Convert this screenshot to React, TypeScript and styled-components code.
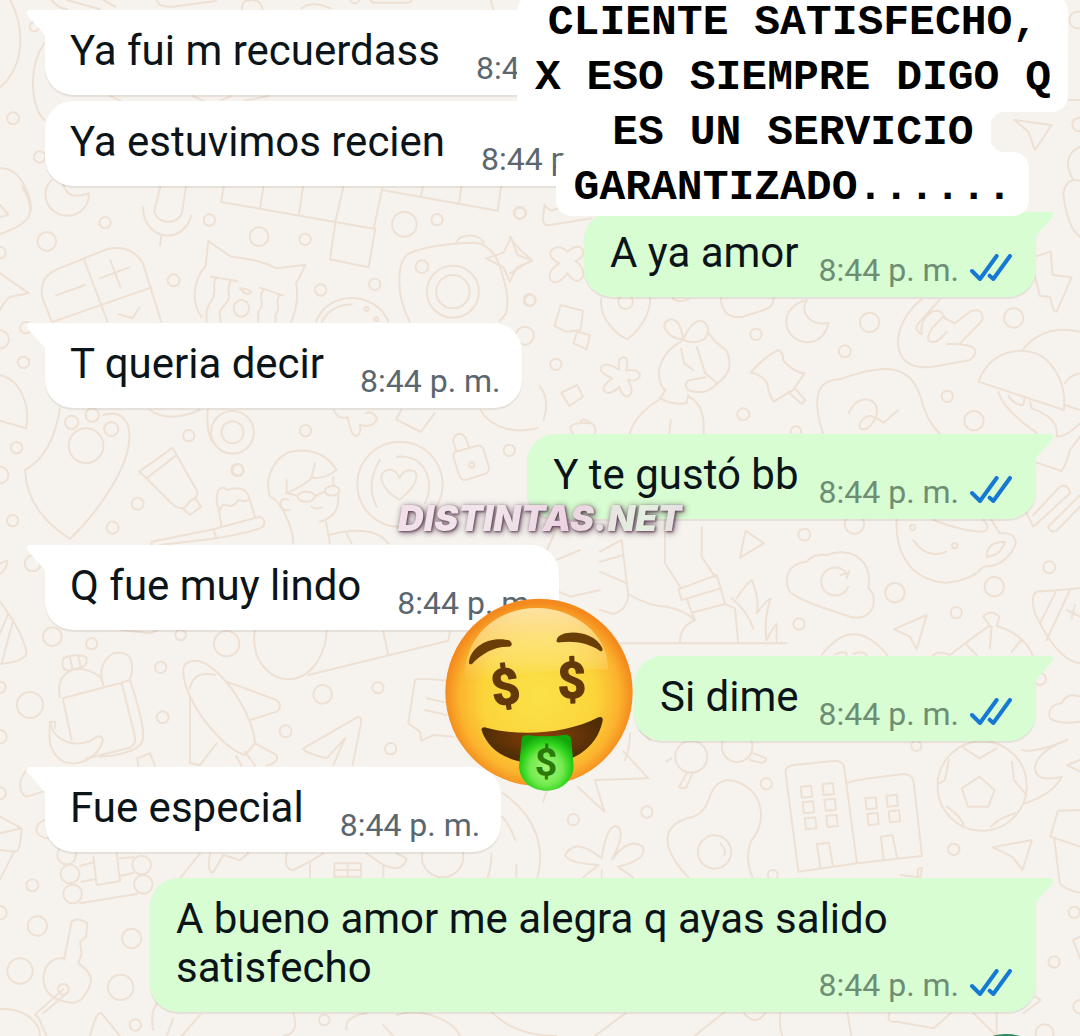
import styled, { createGlobalStyle } from 'styled-components';

export default function App() {
  return (
    <ChatWrapper>
      <GlobalStyle />
      <Wallpaper />
      <MessageList>
        {messages.map((message, index) => (
          <Message key={index} {...message} />
        ))}
      </MessageList>
      <Caption>
        <CaptionBlock>
          CLIENTE SATISFECHO,
          <br />X ESO SIEMPRE DIGO Q
        </CaptionBlock>
        <CaptionJoint>ES UN SERVICIO</CaptionJoint>
        <CaptionFooter>GARANTIZADO......</CaptionFooter>
      </Caption>
      <MoneyFace />
      <Watermark>DISTINTAS.NET</Watermark>
      <RecordButton type="button" aria-label="Mensaje de voz" />
    </ChatWrapper>
  );
}

type MessageProps = {
  text: string;
  time: string;
  mine?: boolean;
  tail?: boolean;
  long?: boolean;
};

function Message({ text, time, mine = false, tail = true, long = false }: MessageProps) {
  return (
    <MessageRow $mine={mine} $tail={tail}>
      <Bubble $mine={mine} $long={long}>
        {tail && (
          <Tail $mine={mine} viewBox="0 0 44 28">
            <path d="M44 0H3Q-1 1 2 6L19 25V28H44Z" />
          </Tail>
        )}
        <BubbleText>{text}</BubbleText>
        <Meta $mine={mine} $long={long}>
          <time>{time}</time>
          {mine && (
            <Ticks viewBox="0 0 126 81">
              <path d="M6 51L30 75L80 6M59 65L70 75L120 6" />
            </Ticks>
          )}
        </Meta>
      </Bubble>
    </MessageRow>
  );
}

function MoneyFace() {
  return (
    <Emoji viewBox="72 54 570 582" role="img" aria-label="money-mouth face">
      <defs>
        <radialGradient id="face" cx="0.5" cy="0.52" r="0.5">
          <stop offset="0" stopColor="#fbe14a" />
          <stop offset="0.6" stopColor="#fbd53a" />
          <stop offset="0.85" stopColor="#fbb42e" />
          <stop offset="1" stopColor="#f48a1d" />
        </radialGradient>
        <linearGradient id="shine" x1="0" y1="0" x2="0" y2="1">
          <stop offset="0" stopColor="#fff3c0" stopOpacity="0.8" />
          <stop offset="0.7" stopColor="#fdeb9a" stopOpacity="0.4" />
          <stop offset="1" stopColor="#fbe27a" stopOpacity="0.05" />
        </linearGradient>
        <radialGradient id="mouth" cx="0.5" cy="0.4" r="0.5">
          <stop offset="0" stopColor="#8a3f0a" />
          <stop offset="1" stopColor="#4f2d05" />
        </radialGradient>
        <radialGradient id="tongue" cx="0.5" cy="0.6" r="0.6">
          <stop offset="0" stopColor="#a6f77c" />
          <stop offset="0.5" stopColor="#72ea4e" />
          <stop offset="0.75" stopColor="#2fd21c" />
          <stop offset="1" stopColor="#12a80c" />
        </radialGradient>
      </defs>
      <circle cx="357" cy="337" r="281" fill="url(#face)" />
      <path
        d="M134 300C130 170 230 84 350 84S568 170 564 270C480 262 430 270 360 276S190 300 134 300Z"
        fill="url(#shine)"
      />
      <path
        d="M147 244C158 186 228 168 270 182Q282 196 268 200C222 198 184 222 156 252Q145 256 147 244Z"
        fill="#6b3e06"
      />
      <path
        d="M410 180C416 148 520 146 547 204Q550 217 540 213C510 190 460 181 422 187Q407 189 410 180Z"
        fill="#6b3e06"
      />
      <FaceDollar x="255" y="373" transform="rotate(-9 255 318)">
        $
      </FaceDollar>
      <FaceDollar x="455" y="353" transform="rotate(-2 455 298)">
        $
      </FaceDollar>
      <path
        d="M184 448Q188 438 202 444C300 470 440 462 535 412Q550 408 548 422C530 510 450 552 366 552C280 552 205 520 184 448Z"
        fill="url(#mouth)"
      />
      <path
        d="M305 478Q306 464 325 466Q380 472 436 464Q452 464 454 480L461 560C458 606 420 632 379 632S300 606 297 560Z"
        fill="url(#tongue)"
      />
      <TongueDollar x="378" y="588">
        $
      </TongueDollar>
    </Emoji>
  );
}

function Wallpaper() {
  return (
    <WallpaperSvg aria-hidden="true">
      {doodles.map(({ x, y, scale, circles, paths }, index) => (
        <g key={index}>
          {circles.map(([cx, cy, r], i) => (
            <circle key={i} cx={x + cx * scale} cy={y + cy / 3} r={r / 3} />
          ))}
          <g transform={`translate(${x} ${y}) scale(${scale} ${1 / 3})`}>
            {paths.map((d, i) => (
              <path key={i} d={d} vectorEffect="non-scaling-stroke" />
            ))}
          </g>
        </g>
      ))}
    </WallpaperSvg>
  );
}

const GlobalStyle = createGlobalStyle`
  * {
    box-sizing: border-box;
  }

  body {
    margin: 0;
    background: #f6f3ee;
    font-family: Roboto, 'Liberation Sans', sans-serif;
  }
`;

const ChatWrapper = styled.main`
  position: relative;
  min-height: 100vh;
  overflow: hidden;
`;

const WallpaperSvg = styled.svg`
  position: absolute;
  inset: 0;
  width: 100%;
  height: 100%;
  fill: none;
  stroke: #eee0d3;
  stroke-width: 2;
  stroke-linecap: round;
  stroke-linejoin: round;
`;

const MessageList = styled.ul`
  position: relative;
  display: flex;
  flex-direction: column;
  margin: 0;
  padding: 10px 44px 24px 45px;
  list-style: none;
`;

const MessageRow = styled.li<{ $mine: boolean; $tail: boolean }>`
  display: flex;
  justify-content: ${({ $mine }) => ($mine ? 'flex-end' : 'flex-start')};
  margin-top: ${({ $tail }) => ($tail ? '26px' : '6px')};

  &:first-child {
    margin-top: 0;
  }
`;

const Bubble = styled.div<{ $mine: boolean; $long: boolean }>`
  position: relative;
  display: flex;
  flex-direction: ${({ $long }) => ($long ? 'column' : 'row')};
  align-items: flex-end;
  gap: ${({ $mine, $long }) => ($long ? '0' : $mine ? '20px' : '36px')};
  max-width: calc(100% - 105px);
  padding: ${({ $mine }) => ($mine ? '16px 24px 9px 26px' : '16px 21px 9px 25px')};
  border-radius: 28px;
  color: #0b1418;
  background: ${({ $mine }) => ($mine ? '#d8fdd2' : '#fff')};
  box-shadow: 0 2px 1px rgba(80, 60, 40, 0.1);
`;

const Tail = styled.svg<{ $mine: boolean }>`
  position: absolute;
  top: 0;
  ${({ $mine }) => ($mine ? 'right: -18px' : 'left: -19px')};
  width: 44px;
  height: 28px;
  transform: ${({ $mine }) => ($mine ? 'scaleX(-1)' : 'none')};
  fill: ${({ $mine }) => ($mine ? '#d8fdd2' : '#fff')};
`;

const BubbleText = styled.p`
  align-self: flex-start;
  margin: 0 0 11px;
  font-size: 42px;
  line-height: 49px;
`;

const Meta = styled.div<{ $mine: boolean; $long: boolean }>`
  display: flex;
  align-items: center;
  gap: 11px;
  margin-top: ${({ $long }) => ($long ? '-36px' : '0')};
  font-size: 32px;
  line-height: 36px;
  white-space: nowrap;
  color: ${({ $mine }) => ($mine ? '#6d8e74' : '#5b676e')};
`;

const Ticks = styled.svg`
  width: 42px;
  height: 27px;
  margin-bottom: 6px;
  fill: none;
  stroke: #1579d3;
  stroke-width: 12;
  stroke-linecap: round;
  stroke-linejoin: round;
`;

const Caption = styled.div`
  position: absolute;
  top: -5px;
  right: 12px;
  display: flex;
  flex-direction: column;
  align-items: center;
  font-family: 'Liberation Mono', monospace;
  font-size: 43px;
  font-weight: 700;
  line-height: 55px;
  text-align: center;
  white-space: nowrap;
  color: #000;
`;

const CaptionBlock = styled.div`
  padding: 0 17px 7px 18px;
  border-radius: 16px;
  background: #fff;
`;

const CaptionJoint = styled.div`
  position: relative;
  margin-top: -7px;
  padding: 0 17px 0 18px;
  background: #fff;

  &::before,
  &::after {
    content: '';
    position: absolute;
    top: 7px;
    bottom: 8px;
    width: 14px;
  }

  &::before {
    right: 100%;
    background:
      radial-gradient(circle at 0 100%, transparent 14px, #fff 15px) top / 14px 14px no-repeat,
      radial-gradient(circle at 0 0, transparent 14px, #fff 15px) bottom / 14px 14px no-repeat;
  }

  &::after {
    left: 100%;
    background:
      radial-gradient(circle at 100% 100%, transparent 14px, #fff 15px) top / 14px 14px no-repeat,
      radial-gradient(circle at 100% 0, transparent 14px, #fff 15px) bottom / 14px 14px no-repeat;
  }
`;

const CaptionFooter = styled.div`
  margin-top: -8px;
  padding: 8px 17px 1px 18px;
  border-radius: 16px;
  background: #fff;
`;

const Emoji = styled.svg`
  position: absolute;
  top: 598px;
  left: calc(50% - 96px);
  width: 190px;
  height: 194px;
`;

const FaceDollar = styled.text`
  font-family: Roboto, sans-serif;
  font-size: 150px;
  font-weight: 700;
  text-anchor: middle;
  fill: #64390a;
  stroke: #64390a;
  stroke-width: 4;
  stroke-linejoin: round;
`;

const TongueDollar = styled(FaceDollar)`
  font-size: 118px;
  fill: #2a7a08;
  stroke: none;
`;

const Watermark = styled.div`
  position: absolute;
  top: 50%;
  left: 50%;
  transform: translate(-50%, -50%);
  font-family: Inter, sans-serif;
  font-size: 36px;
  font-style: italic;
  font-weight: 900;
  line-height: 40px;
  color: transparent;
  background: linear-gradient(100deg, #f3dfea, #f0e6ea 30%, #ecd3e2 60%, #e3f0df 85%, #eadbe4);
  background-clip: text;
  filter: drop-shadow(1px 1px 1px rgba(70, 30, 60, 0.7)) drop-shadow(1px 1px 3px rgba(50, 20, 45, 0.6));
`;

const RecordButton = styled.button`
  position: absolute;
  right: 24px;
  bottom: -98px;
  width: 100px;
  height: 100px;
  border: 0;
  border-radius: 50%;
  background: #2b8a5c;
`;

const messages: MessageProps[] = [
  { text: 'Ya fui m recuerdass', time: '8:44 p. m.' },
  { text: 'Ya estuvimos recien', time: '8:44 p. m.', tail: false },
  { text: 'A ya amor', time: '8:44 p. m.', mine: true },
  { text: 'T queria decir', time: '8:44 p. m.' },
  { text: 'Y te gustó bb', time: '8:44 p. m.', mine: true },
  { text: 'Q fue muy lindo', time: '8:44 p. m.' },
  { text: 'Si dime', time: '8:44 p. m.', mine: true },
  { text: 'Fue especial', time: '8:44 p. m.' },
  {
    text: 'A bueno amor me alegra q ayas salido satisfecho',
    time: '8:44 p. m.',
    mine: true,
    long: true,
  },
];

type Doodle = {
  x: number;
  y: number;
  scale: number;
  circles: number[][];
  paths: string[];
};

const doodles: Doodle[] = [
  // top left corner
  {
    x: 0,
    y: 0,
    scale: 0.3444,
    circles: [[38, 355, 18], [115, 471, 17], [100, 80, 14], [1030, -5, 15]],
    paths: [
      'M30 0C75 90 70 200 0 262M128 130C80 200 90 330 130 360',
      'M150 0Q170 25 195 28M195 0L290 28M300 0L335 20',
      'M455 0Q460 22 500 20L610 5Q625 5 628 0M702 28Q700 0 730 0T762 28',
      'M875 25Q905 0 960 25M1075 0Q1080 10 1095 8L1185 8Q1195 5 1196 0M1425 0L1432 28',
      'M0 505C60 500 90 590 90 630M320 288L350 302M560 288L590 302M640 302L670 288M710 302L780 288',
    ],
  },
  // left: moon, microphone, crossword, calculator, cat, camera
  {
    x: 0,
    y: 180,
    scale: 0.3444,
    circles: [
      [305, 128, 17], [608, 120, 17], [136, 184, 28], [752, 170, 28], [886, 178, 17],
      [504, 301, 18], [1174, 133, 37], [1269, 119, 17], [1510, 100, 17], [931, 330, 17],
      [1088, 313, 17], [1225, 260, 19], [1315, 335, 78], [1315, 335, 50], [1524, 467, 27],
      [1539, 361, 16], [68, 547, 17], [75, 443, 17], [0, 478, 27], [0, 218, 17],
      [208, 727, 20], [268, 705, 20], [323, 747, 21], [250, 797, 52], [548, 767, 17],
      [48, 803, 17], [675, 757, 64], [675, 757, 33], [887, 752, 17], [691, 870, 17],
      [0, 885, 25], [1479, 811, 17], [1370, 855, 8], [1064, 387, 6], [1093, 418, 6],
    ],
    paths: [
      'M180 0C190 60 230 50 258 40A63 63 0 1 1 150 0',
      'M465 20L448 95A42 40 0 0 0 528 100L540 20M415 80C415 180 530 200 556 106M468 170L465 195',
      'M650 20L642 66L1085 146L1110 25M765 20L755 85M880 20L868 103M997 20L975 120L958 238L1070 262L1090 146M1110 30L1445 92L1455 20M1228 20L1222 48M1340 20L1333 70',
      'M65 20C110 100 90 130 0 162M0 75L24 104L0 112',
      'M150 425L122 350Q115 290 165 268L310 208Q380 190 415 250L468 425M243 236L312 425M155 425L440 322M163 346L247 315M290 295L375 262M320 240L350 322M345 403L385 415L405 382',
      'M0 280L84 340L30 350Q15 360 0 390',
      'M585 410C555 370 560 300 597 258L605 183L670 230Q745 235 803 265L887 255L860 310Q870 370 845 425M612 290L688 303M755 323L822 347M697 325Q735 330 728 338Q715 350 697 325M700 360a22 25 0 1 0 2 0',
      'M628 295C610 320 635 330 615 360S600 400 600 425M672 300C650 330 680 345 652 375S645 405 640 425M765 330C745 350 775 365 750 395V425M812 345C795 370 820 380 800 405V425',
      'M918 425C950 330 1090 330 1128 425M935 425Q960 375 1022 373',
      'M1190 425C1150 350 1150 250 1185 222Q1250 190 1380 188Q1440 195 1460 290Q1480 350 1470 400L1450 425M1325 185C1340 160 1390 160 1405 188',
      'M1483 172L1503 225L1547 242L1500 262L1480 305L1462 262L1412 235L1462 218Z',
      'M0 585C60 600 90 680 75 745L0 722',
      'M435 690Q490 730 580 690M603 690Q598 760 620 790',
      'M970 690Q980 720 1010 712Q1020 770 1035 768Q1050 760 1045 735Q1085 745 1095 715Q1080 690 1062 700M1165 690L1150 718L1222 756L1262 700M1395 690C1430 750 1500 760 1560 745',
      'M1322 815L1385 797Q1398 795 1404 808L1420 862Q1420 878 1408 882L1352 900Q1338 900 1334 888L1318 835Q1315 820 1322 815ZM1325 812L1316 785Q1315 763 1335 761Q1350 763 1354 780L1362 802',
    ],
  },
  // left: shield, tube, cake, girl with glasses, heart
  {
    x: 0,
    y: 400,
    scale: 0.3333,
    circles: [
      [413, 311, 18], [338, 383, 18], [712, 210, 18], [38, 362, 17], [157, 710, 28],
      [275, 731, 17], [482, 802, 17], [680, 731, 38], [968, 883, 28], [1134, 863, 17],
      [542, 705, 16], [98, 490, 24], [0, 862, 17], [1200, 253, 128],
    ],
    paths: [
      'M180 25C165 120 130 180 75 210C80 330 170 390 210 417C290 340 410 180 385 80Q370 30 310 45',
      'M418 215L518 143L530 165L440 235ZM530 165L592 275Q595 295 570 302Q560 320 548 325Q535 325 520 315L440 235M548 325L570 345L603 320L588 298',
      'M455 435L455 425L640 388L780 350Q800 360 790 378Q785 390 650 415L480 435M640 388L650 415M665 380L655 325Q645 300 655 270Q670 255 680 270Q730 255 745 285Q755 310 715 300Q700 325 680 315Q665 310 660 330M750 300L765 352',
      'M880 430C880 380 840 300 810 290C790 230 830 155 890 152Q970 145 1010 210Q970 240 935 232Q925 250 860 280V240M935 232L945 190M865 300Q840 290 842 315Q850 335 870 330M1000 230V258M1015 285Q1020 350 960 365M935 320Q945 330 965 322M978 365L990 430M985 405Q1120 370 1165 430M1040 400L1055 430',
      'M893 290Q895 275 920 275Q945 275 945 290Q940 305 920 305Q895 305 893 290ZM975 270Q985 255 1005 258Q1025 265 1015 280Q1000 290 985 285Q975 280 975 270ZM945 288L975 275M865 280L893 288',
      'M1140 180Q1095 250 1130 320M1190 170Q1250 165 1275 210T1275 310M1198 300C1150 270 1130 230 1155 213Q1185 200 1198 235Q1215 200 1245 215Q1265 245 1198 300Z',
      'M0 490L22 482Q20 510 0 522M0 605Q70 700 80 760Q70 785 0 792M40 660L5 790M25 640L0 700',
    ],
  },
  // bottom left: bottle, banana, rocket, paper plane, key
  {
    x: 0,
    y: 620,
    scale: 0.3333,
    circles: [
      [90, 255, 39], [488, 292, 18], [857, 334, 18], [1172, 386, 17], [0, 350, 20],
      [0, 520, 18], [97, 796, 18], [112, 918, 29], [395, 955, 29], [60, 1053, 38],
      [362, 1102, 38], [0, 878, 20], [406, 1215, 17], [973, 1200, 16], [190, 1108, 16],
      [200, 705, 28], [210, 762, 28], [218, 822, 28], [425, 735, 28], [430, 793, 28],
      [1328, 710, 62],
    ],
    paths: [
      'M190 115Q180 150 205 152L250 140Q265 130 258 110Q220 100 190 115M210 112L218 150M235 108L243 145M180 232Q170 180 200 160Q240 130 300 170L310 195M188 235L365 188L405 350Q410 375 385 385L260 415M188 235L215 360M365 188L390 180Q430 300 430 350T300 410M310 195Q290 130 340 100Q390 90 395 130Q400 160 388 180',
      'M150 305C160 370 240 390 290 350Q310 345 308 365C290 420 230 440 190 425Q150 400 148 350ZM150 305h15v20',
      'M550 160C545 120 590 110 630 140C700 190 760 300 765 370L735 405C660 380 560 250 550 160M570 205Q580 150 645 165M680 185L830 240Q850 260 830 275L750 300M570 230V430L600 435L650 370M708 408L725 437M735 395L765 437M765 370L830 405Q840 425 800 437',
      'M910 385L1075 290Q1085 290 1083 310L1058 435M910 385Q905 395 980 415L1035 355L1000 435',
      'M1245 180Q1250 172 1340 182M1245 180L1225 310L1260 335L1265 362L1300 345L1360 350M1280 235L1340 248M1275 270L1340 285',
      'M765 30C750 120 810 180 870 178C950 170 980 80 980 30M925 165L1345 62L1350 35M1150 35L1165 105M365 30L450 40L475 30',
      'M415 437L412 415L450 400L465 437M62 480Q55 520 80 530L130 515M75 455L62 480',
      'M0 590L65 625Q60 690 50 695L0 690M65 625L0 640M40 700L0 778M110 635Q105 610 135 600M110 635Q120 655 145 655',
      'M240 850L410 822M280 710L290 795L360 783L350 700M240 738L275 728M245 785L282 778M360 715L400 712M360 768L400 758',
      'M540 775L600 700M630 700Q620 760 640 757L670 705L720 720L745 700M860 700Q850 750 880 750L930 725V773M930 725L970 700M1100 700L1150 735V773M1150 735Q1210 760 1220 715L1190 700M1003 730H1083V770H1003ZM1043 730V770M1003 750H1083',
      'M192 1020L215 905Q235 890 262 910L258 950L240 965L245 1000L235 1030Q280 1060 272 1090Q250 1150 215 1148Q130 1140 130 1070Q140 1010 192 1015M190 1108L120 1170L105 1185L115 1192M205 1115L130 1180M0 1168C60 1160 120 1200 120 1248M140 1248L115 1192',
      'M270 1248Q290 1170 305 1180L360 1248M470 1150Q450 1180 460 1230M520 1195L500 1248M600 1185L545 1248M880 1180Q900 1240 850 1248M1150 1215L1180 1248M1190 1185C1260 1160 1360 1200 1380 1248M1040 1230Q1030 1190 1100 1180',
    ],
  },
  // top right corner
  {
    x: 510,
    y: 0,
    scale: 0.3635,
    circles: [[27, 638, 18], [54, 900, 18], [1562, 60, 25], [318, 905, 22]],
    paths: [
      'M95 615L90 660Q95 680 110 675L225 655M95 615Q110 640 130 625M0 710Q15 740 60 780L0 820M1535 300H1568',
      'M158 755Q190 725 203 755Q200 775 180 783Q205 800 200 830Q185 860 158 820Q130 860 112 840Q100 815 135 790Q95 765 120 745Q140 735 158 755',
    ],
  },
  // middle right: moon, flower, girl with bow, pin, scribble
  {
    x: 540,
    y: 290,
    scale: 0.3444,
    circles: [
      [627, 133, 17], [957, 97, 29], [885, 184, 18], [590, 373, 18], [46, 223, 17],
      [743, 425, 16],
    ],
    paths: [
      'M60 45L125 62L118 120L75 125L42 108ZM108 125L145 135L135 178L97 160Z',
      'M178 25C170 90 230 140 255 148Q320 90 320 25M385 25Q400 40 430 28M525 25Q530 90 590 80L650 60Q680 50 678 25',
      'M775 30C690 50 700 150 775 157Q825 155 838 98C790 110 750 70 775 30Z',
      'M230 240Q225 200 243 202Q260 205 250 242Q290 235 290 258Q285 275 255 270Q275 305 258 318Q240 325 230 290Q200 320 185 302Q180 285 210 265Q165 245 180 228Q195 215 230 240Z',
      'M62 308L108 285L125 320L85 348Z',
      'M415 150C360 140 345 95 380 88Q410 90 415 150Q440 90 470 92Q500 110 480 145Q450 165 415 150M410 155Q360 180 345 240Q345 290 365 300L345 330Q280 370 260 430M490 130Q510 160 540 180Q570 240 515 280M455 170L480 250L515 280Q480 320 430 300Q415 280 435 270L480 262M430 315L425 340Q380 345 350 325M430 320Q480 340 475 430M380 390L375 430M410 175L418 220L445 240',
      'M690 180Q710 190 705 210Q740 250 768 250L735 300Q700 320 680 335Q665 320 660 280Q640 250 612 248Q640 210 690 180M720 305L760 342L770 330L740 295',
      'M822 430C790 330 800 270 870 268Q960 235 1010 237Q1080 240 1105 320Q1120 390 1160 430M897 368C920 315 965 320 977 350C985 385 955 420 935 418C915 410 940 375 962 378Q980 385 998 398L1040 360',
      'M0 290Q30 330 10 390M88 415Q90 395 150 400Q165 410 160 430M88 415L95 430M118 395Q125 380 145 398',
    ],
  },
  // right edge: hand, bolt, umbrella
  {
    x: 860,
    y: 90,
    scale: 0.3333,
    circles: [
      [461, 684, 29], [262, 919, 17], [342, 992, 29], [657, 104, 20],
      [158, 1312, 8], [284, 1367, 8],
    ],
    paths: [
      'M463 90L575 105L525 180L505 125ZM660 170Q600 200 640 270M610 310Q620 260 660 272M610 310Q620 410 660 440',
      'M185 628C90 700 80 850 220 830L330 810Q360 785 335 770Q310 760 262 762M240 628L175 700Q160 720 185 732M215 665Q180 690 185 730M250 680Q200 725 205 750Q225 770 260 725M215 665Q245 655 255 685L285 700L330 665Q370 650 368 690L300 760',
      'M525 500L572 485L578 555L635 562L590 665Q580 670 570 620L540 618L525 560',
      'M355 875C400 760 520 770 560 810Q620 870 612 960ZM488 780Q550 700 660 725M615 880Q630 855 660 850M615 945L660 960M415 905Q430 960 530 1028M445 915Q460 945 490 945L495 920M510 935L515 955Q600 985 590 1040Q620 1040 660 1000',
      'M530 1118L605 1143Q620 1120 630 1080L660 1040M500 1270L520 1310L630 1210Q625 1180 600 1190L520 1275M565 1310Q570 1330 590 1322L660 1250M565 1310L660 1215',
    ],
  },
  // right: legs, cloud, cup, football
  {
    x: 600,
    y: 500,
    scale: 0.3333,
    circles: [
      [613, 104, 18], [763, 72, 29], [885, 278, 29], [1183, 260, 29], [597, 372, 17],
      [1069, 338, 17], [1348, 202, 18], [1320, 537, 18],
    ],
    paths: [
      'M437 92L492 130L420 173Z',
      'M620 185C560 190 550 240 570 275Q590 300 750 350C820 370 840 290 805 265C820 170 740 140 680 165Q640 160 620 185M745 260A42 42 0 1 1 740 220L722 225M748 212L740 235',
      'M890 60C885 200 970 245 1040 248Q1120 240 1150 200Q1220 200 1248 130Q1245 95 1200 100Q1180 70 1175 60M940 120Q980 180 1040 155M1160 170Q1160 125 1215 125Q1200 170 1160 170M1000 60Q1090 95 1150 95Q1175 85 1150 60',
      'M882 388L980 345L950 448L930 410Z',
      'M1440 265L1310 275Q1290 290 1305 340Q1370 480 1440 490M1370 270L1320 370M1410 270L1340 420M1400 330L1440 350M1425 315L1415 355',
      'M195 60V190L240 260M305 80V170L345 230M235 268L350 225L362 265L245 300ZM262 300L275 338L375 312L362 265M375 312L405 325L415 430M275 338L285 360Q240 380 240 425M90 285Q150 320 200 320Q250 330 285 360M60 430H560M0 155L65 120L70 165L0 185M70 165L85 285Q80 330 40 342L0 330M0 215L80 250',
      'M395 295Q440 330 460 385M410 295Q440 250 455 240Q480 300 470 340Q500 300 512 295Q490 360 500 420Q520 380 530 372V425',
      'M665 465Q760 340 862 465M705 463Q740 450 740 465M760 462Q790 450 800 465M1000 465Q1020 450 1050 465Q1160 380 1170 378L1150 350Q1170 325 1198 350L1190 378Q1270 400 1298 465M1175 380L1170 445M1100 435L1130 465M1265 420L1235 455',
      'M1440 590Q1400 575 1385 610Q1340 615 1350 655Q1380 675 1440 665M90 700Q90 740 75 780M120 690L150 720',
      'M-120 60L-180 200L-60 150M-140 90L-60 60M-200 240L-90 290L0 270',
    ],
  },
  // bottom right: egg, buildings, ball, flower
  {
    x: 480,
    y: 740,
    scale: 0.3827,
    circles: [
      [748, 131, 17], [436, 216, 17], [244, 239, 17], [552, 50, 48], [672, 20, 46],
      [613, 336, 50], [1312, 138, 134], [1238, 328, 17], [1140, 18, 15], [1500, 666, 17],
      [1553, 517, 17], [1568, 800, 20], [1475, 880, 27], [765, 405, 15],
    ],
    paths: [
      'M375 35L440 115L300 120M300 120L325 215L255 140M165 185L175 150M540 100L520 140Q530 150 540 140L555 100M715 40L748 55Q745 70 735 68L705 60M500 55L487 65',
      'M648 120C580 130 620 220 540 235C450 270 500 360 545 412M648 120C730 130 760 230 710 300Q690 350 712 412M628 310Q645 330 638 345',
      'M318 355Q330 260 355 258Q385 270 345 358Q390 290 425 320Q440 360 360 380L400 412M318 355Q250 290 222 345Q230 370 310 375L270 412M318 390V412',
      'M832 395L798 95Q800 78 820 75L930 62Q950 65 952 85L985 370ZM960 130Q965 120 1110 102Q1130 105 1133 125L1155 348L985 370M890 385L880 312L912 308L922 380M1055 360L1047 290L1078 286L1090 355',
      'M838 140l27 -3l3 33l-27 3zM895 132l27 -3l3 33l-27 3zM843 187l27 -3l3 33l-27 3zM900 179l27 -3l3 33l-27 3zM849 235l27 -3l3 33l-27 3zM905 228l27 -3l3 33l-27 3z',
      'M1007 175l27 -3l3 33l-27 3zM1062 167l27 -3l3 33l-27 3zM1012 222l27 -3l3 33l-27 3zM1068 214l27 -3l3 33l-27 3z',
      'M1259 145L1305 110L1345 150L1328 200L1275 200ZM1265 25L1305 55L1350 25M1225 60L1215 120L1200 130M1390 65L1395 120L1425 160M1220 200Q1260 230 1265 262M1335 260Q1360 230 1400 220',
      'M1415 30Q1450 40 1535 0M1520 110Q1450 130 1450 80Q1460 30 1535 0M1425 190Q1500 160 1520 110M1568 60L1535 75L1568 95',
      'M1340 322L1442 300L1418 390L1390 350Z',
      'M1568 210L1510 212L1490 290L1568 320M1500 292L1515 430Q1530 450 1568 458M1568 590L1550 600L1568 655',
      'M60 160C150 230 170 330 150 412M58 230Q80 260 92 300M30 340Q30 380 20 412M95 375V412M1100 405L1145 412Q1140 380 1155 385L1150 412',
      'M30 815Q90 888 200 888M380 820L300 888M640 815L560 888M785 820Q780 860 790 888M690 820Q720 860 745 820M1070 820Q1060 850 1090 845L1185 865L1230 820M1290 820L1350 888V820M960 815L970 888M1450 770L1465 780L1420 820',
    ],
  },
];
